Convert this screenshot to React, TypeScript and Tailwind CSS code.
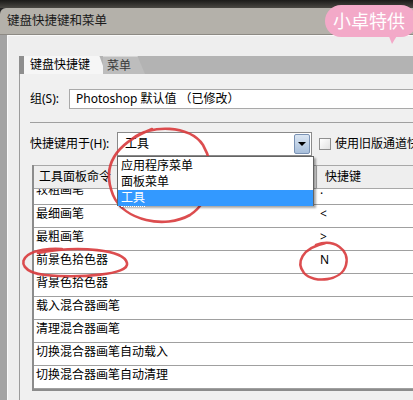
import React from 'react';

const rows = [
  { name: '较粗画笔', key: '.', partial: true },
  { name: '最细画笔', key: '<' },
  { name: '最粗画笔', key: '>' },
  { name: '前景色拾色器', key: 'N' },
  { name: '背景色拾色器', key: '' },
  { name: '载入混合器画笔', key: '' },
  { name: '清理混合器画笔', key: '' },
  { name: '切换混合器画笔自动载入', key: '' },
  { name: '切换混合器画笔自动清理', key: '' },
];

const ShortcutTable: React.FC = () => (
  <div className="mt-[9px] ml-[2px] mr-[1px] flex flex-col border-l-2 border-r border-b-2 border-[#8c8c8c] bg-white">
    {/* header */}
    <div className="flex h-[24px] border-t border-b border-[#a8a8a8] bg-[#eeeeee]">
      <div className="w-[283px] pl-[5px] leading-[22px] border-r border-[#a8a8a8]">工具面板命令</div>
      <div className="flex-1 pl-[8px] leading-[22px]">快捷键</div>
    </div>
    {rows.map((r) => (
      <div
        key={r.name}
        className={`flex border-b border-[#a0a0a0] overflow-hidden ${r.partial ? 'h-[16px]' : 'h-[23px]'}`}
      >
        <div className={`w-[284px] pl-[2px] leading-[16px] ${r.partial ? 'mt-[-7px]' : 'pt-[1px]'}`}>{r.name}</div>
        <div className={`flex-1 pl-[2px] leading-[16px] ${r.partial ? 'mt-[-7px]' : 'pt-[1px]'}`}>{r.key}</div>
      </div>
    ))}
  </div>
);

export default function App() {
  return (
    <div className="relative w-[413px] h-[400px] overflow-hidden bg-[#262626] flex flex-col font-['Noto_Sans','Noto_Sans_CJK_SC',sans-serif] text-[12px] text-black">
      {/* dark backdrop above window */}
      <div className="h-[8px] bg-gradient-to-b from-[#1c1b19] to-[#4a4843]" />

      <div className="flex-1 flex">
        {/* backdrop strip on the left */}
        <div className="w-[3px] flex flex-col bg-[#2a2a2a]">
          <div className="mt-[332px] h-[22px] bg-[#3d6fb0]" />
        </div>

        {/* window */}
        <div className="flex-1 flex flex-col bg-[#b4b1aa] rounded-tl-[6px]">
          <div className="h-[27px] flex items-center pl-[7px] text-[12.5px] text-[#1a1a1a] border-b border-[#8d8a84]">
            键盘快捷键和菜单
          </div>

          <div className="flex-1 flex">
            <div className="w-[7px] bg-[#a3a3a3]" />
            <div className="flex-1 flex flex-col bg-[#eeeeee] border-l border-t border-[#fafafa]">
              {/* tabs */}
              <div className="mt-[20px] ml-[11px] h-[18px] flex bg-[#b3b3b3]">
                <div className="w-[5px] bg-[#8e8e8e]" />
                <div className="w-[82px] pl-[6px] leading-[18px] bg-[#f6f6f6] [clip-path:polygon(0_0,92%_0,100%_100%,0_100%)]">
                  键盘快捷键
                </div>
                <div className="w-[42px] -ml-[3px] pl-[4px] leading-[18px] text-[#3a3a3a] bg-[#bdbdbd] border-t border-[#d6d6d6] [clip-path:polygon(0_0,82%_0,100%_100%,0_100%)]">
                  菜单
                </div>
              </div>

              {/* tab panel */}
              <div className="flex-1 flex flex-col ml-[11px] pl-[10px] bg-[#f0f0f0] border-l border-[#9c9c9c]">
                <div className="mt-[15px] flex h-[20px]">
                  <div className="w-[39px] leading-[20px]">组(S):</div>
                  <div className="flex-1 bg-white border border-[#a9a9a9] border-r-0 pl-[6px] leading-[18px]">
                    Photoshop 默认值 （已修改）
                  </div>
                </div>

                <div className="mt-[13px] h-px bg-[#a0a0a0]" />

                <div className="mt-[9px] flex h-[24px] items-center">
                  <div className="w-[87px]">快捷键用于(H):</div>
                  <div className="relative w-[195px] h-[24px] flex bg-white border border-[#8a8a8a]">
                    <div className="flex-1 pl-[7px] leading-[22px]">工具</div>
                    <div className="w-[16px] my-[1px] mr-px flex items-center justify-center rounded-[2px] border border-[#7a92b4] bg-gradient-to-b from-[#dbe6f3] to-[#a8bfdb]">
                      <div className="w-0 h-0 border-l-[4px] border-r-[4px] border-t-[4px] border-l-transparent border-r-transparent border-t-black" />
                    </div>
                    {/* open dropdown list */}
                    <div className="absolute left-[-1px] top-[23px] w-[197px] h-[50px] z-10 flex flex-col pt-px bg-white border border-[#646464] shadow-[2px_2px_2px_rgba(0,0,0,0.35)]">
                      <div className="h-[16px] pl-[3px] leading-[16px]">应用程序菜单</div>
                      <div className="h-[16px] pl-[3px] leading-[16px]">面板菜单</div>
                      <div className="h-[16px] pl-[3px] leading-[16px] bg-[#3399ff] text-white">
                        <span className="border-b border-dotted border-white">工具</span>
                      </div>
                    </div>
                  </div>
                  <div className="ml-[7px] w-[12px] h-[12px] border border-[#8f8f8f] bg-gradient-to-br from-white to-[#e2e2e2]" />
                  <div className="ml-[4px] whitespace-nowrap">使用旧版通道快捷键</div>
                </div>

                <ShortcutTable />
              </div>
            </div>
          </div>
        </div>
      </div>

      {/* pink watermark badge */}
      <div className="absolute left-[325px] top-[5px] w-[92px] h-[32px] rounded-full bg-[#f3a9c8] text-white text-[18px] leading-[32px] pl-[8px] whitespace-nowrap">
        小卓特供
      </div>
      <div className="absolute left-[388px] top-[34px] w-0 h-0 border-l-[4px] border-r-[6px] border-t-[10px] border-l-transparent border-r-transparent border-t-[#f3a9c8]" />

      {/* red hand-drawn marks */}
      <svg className="absolute inset-0 pointer-events-none" width="413" height="400" viewBox="0 0 413 400">
        <g fill="none" stroke="#d93a3c" strokeWidth="2.6" strokeLinecap="round" opacity="0.9">
          <path d="M 132 139 C 150 124, 190 125, 203 145 C 215 165, 213 200, 190 215 C 165 229, 124 221, 113 195 C 103 170, 110 146, 152 129" />
          <path d="M 38 253 C 80 245, 124 250, 127 263 C 130 275, 80 278, 45 275 C 24 273, 18 262, 28 255 C 35 250, 50 248, 62 249" />
          <path d="M 316 245 C 334 238, 350 250, 346 265 C 342 281, 314 284, 304 273 C 296 263, 301 248, 326 243" />
        </g>
      </svg>
    </div>
  );
}
